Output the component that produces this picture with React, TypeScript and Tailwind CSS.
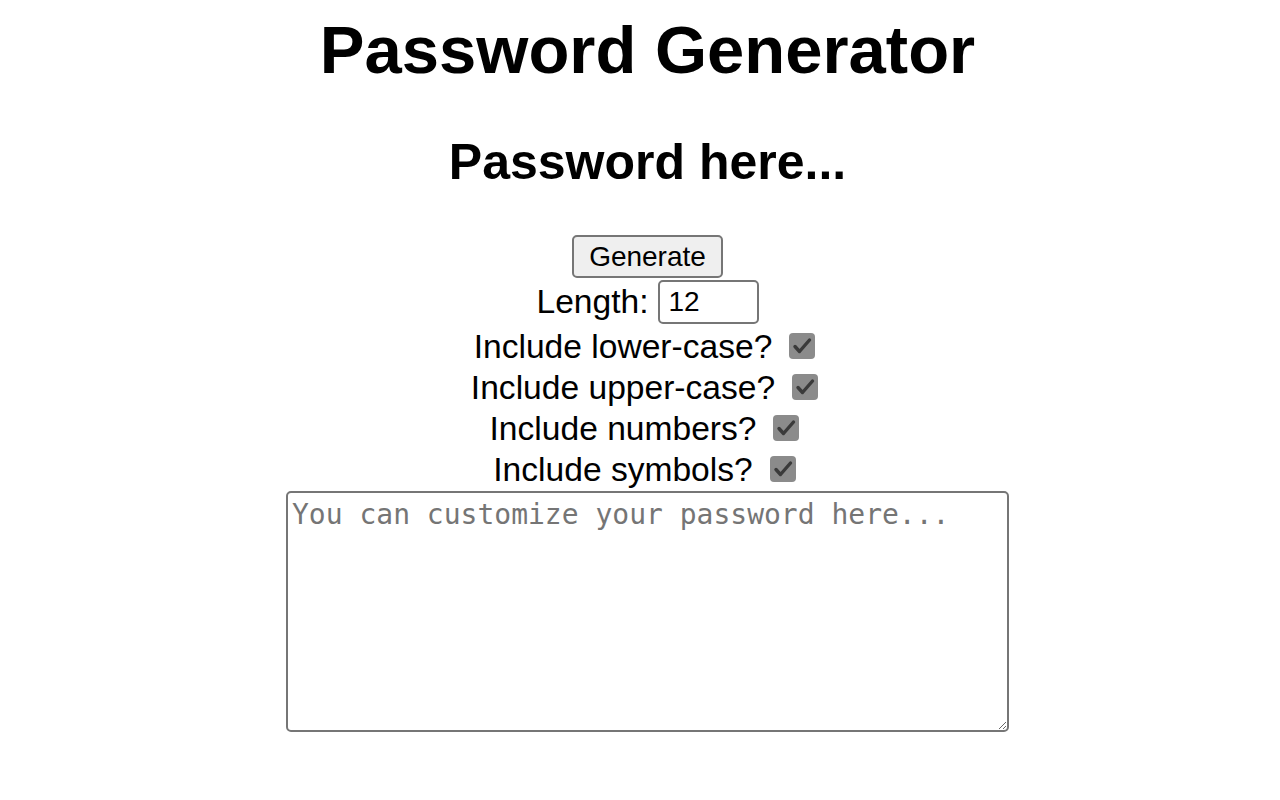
import { useState } from "react";

const options = [
  { key: "lower", label: "Include lower-case?" },
  { key: "upper", label: "Include upper-case?" },
  { key: "numbers", label: "Include numbers?" },
  { key: "symbols", label: "Include symbols?" },
];

function GreyCheck({ checked, onToggle }: { checked: boolean; onToggle: () => void }) {
  return (
    <button
      type="button"
      onClick={onToggle}
      className="ml-[17px] mr-[6px] mb-[3px] flex h-[26px] w-[26px] items-center justify-center rounded-[4px] bg-[#8b8b8b]"
    >
      {checked && (
        <svg width="26" height="26" viewBox="0 0 26 26">
          <path d="M6 13.5 L10.5 18.5 L20.5 7" fill="none" stroke="#3a3a3a" strokeWidth="3.4" strokeLinecap="round" strokeLinejoin="round" />
        </svg>
      )}
    </button>
  );
}

export default function App() {
  const [length, setLength] = useState("12");
  const [flags, setFlags] = useState<Record<string, boolean>>({
    lower: true,
    upper: true,
    numbers: true,
    symbols: true,
  });

  return (
    <div className="min-h-screen bg-white pl-[15px] pt-[11px] text-center text-black [font-family:'Liberation_Sans',Arial,sans-serif]">
      <h1 className="text-[67px] font-bold leading-[77px]">Password Generator</h1>
      <h2 className="mt-[45px] text-[50px] font-bold leading-[58px]">Password here...</h2>

      <div className="mt-[44px] flex flex-col items-center">
        <button className="h-[43px] w-[151px] rounded-[5px] border-2 border-[#767676] bg-[#efefef] text-[28px] leading-none">
          Generate
        </button>

        <div className="flex h-[48px] items-center justify-center text-[33.6px]">
          <span>Length:</span>
          <input
            value={length}
            onChange={(e) => setLength(e.target.value)}
            className="ml-[9px] h-[44px] w-[101px] rounded-[5px] border-2 border-[#767676] px-[9px] text-[28px] outline-none"
          />
        </div>

        {options.map((opt) => (
          <div key={opt.key} className="flex h-[41px] items-center justify-center pt-[2px] text-[33.6px]">
            <span>{opt.label}</span>
            <GreyCheck
              checked={flags[opt.key]}
              onToggle={() => setFlags({ ...flags, [opt.key]: !flags[opt.key] })}
            />
          </div>
        ))}

        <textarea
          placeholder="You can customize your password here..."
          className="mt-[1px] h-[241px] w-[723px] rounded-[5px] border-2 border-[#767676] px-[4px] pt-[5px] text-[28px] leading-[34px] placeholder:text-[#757575] [font-family:'DejaVu_Sans_Mono',monospace]"
        />
      </div>
    </div>
  );
}
